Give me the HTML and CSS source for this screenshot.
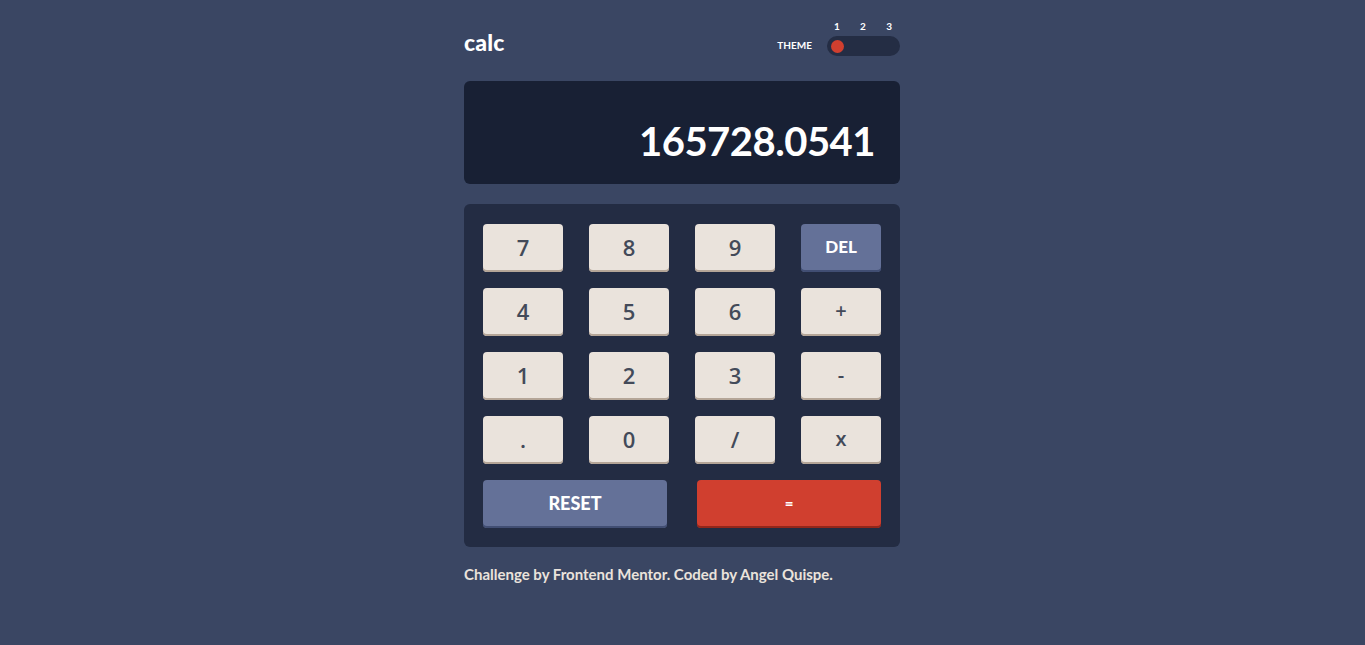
FILE: index.html
```html
<!DOCTYPE html>
<html lang="en">
<head>
<meta charset="utf-8">
<title>Calculator</title>
<link rel="stylesheet" href="styles.css">
</head>
<body>
<main class="calc">
  <header class="header">
    <h1 class="logo">calc</h1>
    <div class="theme">
      <span class="theme-label">THEME</span>
      <div class="theme-switch">
        <div class="theme-nums"><span>1</span><span>2</span><span>3</span></div>
        <div class="toggle"><span class="dot"></span></div>
      </div>
    </div>
  </header>
  <section class="display">165728.0541</section>
  <section class="keypad">
    <div class="keys">
      <button class="key">7</button>
      <button class="key">8</button>
      <button class="key">9</button>
      <button class="key key-alt">DEL</button>
      <button class="key">4</button>
      <button class="key">5</button>
      <button class="key">6</button>
      <button class="key key-op">+</button>
      <button class="key">1</button>
      <button class="key">2</button>
      <button class="key">3</button>
      <button class="key key-op">-</button>
      <button class="key">.</button>
      <button class="key">0</button>
      <button class="key">/</button>
      <button class="key key-op">x</button>
    </div>
    <div class="wide-keys">
      <button class="key key-alt key-wide">RESET</button>
      <button class="key key-eq key-wide">=</button>
    </div>
  </section>
  <footer class="footer">Challenge by Frontend Mentor. Coded by Angel Quispe.</footer>
</main>
</body>
</html>
```
FILE: styles.css
```css
* { box-sizing: border-box; }
html, body { margin: 0; padding: 0; }
body {
  background: #3a4663;
  font-family: Lato, "Noto Sans", sans-serif;
  color: #ffffff;
  min-height: 645px;
}
.calc {
  width: 436px;
  margin: 0 auto 0 464px;
  padding-top: 20px;
}
.header {
  display: flex;
  justify-content: space-between;
  align-items: flex-end;
  height: 36px;
}
.logo {
  margin: 0 0 2px 0;
  font-size: 23px;
  font-weight: 900;
  line-height: 24px;
  letter-spacing: 0.2px;
}
.theme {
  display: flex;
  align-items: flex-end;
  gap: 15px;
}
.theme-label {
  font-size: 10px;
  font-weight: 700;
  line-height: 12px;
  margin-bottom: 5px;
}
.theme-switch {
  display: flex;
  flex-direction: column;
  width: 73px;
}
.theme-nums {
  display: flex;
  justify-content: space-between;
  padding: 0 8px 0 7px;
  font-size: 10px;
  font-weight: 700;
  line-height: 12px;
  height: 12px;
  margin-bottom: 4px;
}
.toggle {
  height: 20px;
  border-radius: 10px;
  background: #242d44;
  display: flex;
  align-items: center;
  padding-left: 4px;
}
.dot {
  width: 13px;
  height: 13px;
  border-radius: 50%;
  background: #d03f2f;
}
.display {
  margin-top: 25px;
  height: 103px;
  border-radius: 6px;
  background: #182034;
  display: flex;
  align-items: center;
  justify-content: flex-end;
  padding: 16px 25px 0 0;
  font-size: 40px;
  font-weight: 700;
  letter-spacing: -0.5px;
}
.keypad {
  margin-top: 20px;
  background: #232c43;
  border-radius: 6px;
  padding: 20px 19px 19px 19px;
  display: flex;
  flex-direction: column;
  gap: 16px;
}
.keys {
  display: grid;
  grid-template-columns: repeat(4, 80px);
  column-gap: 26px;
  row-gap: 16px;
}
.key {
  height: 48px;
  border: none;
  border-radius: 4px;
  background: #eae3dc;
  box-shadow: inset 0 -2px 0 #b4a597;
  color: #434a59;
  font-family: "Open Sans", Lato, sans-serif;
  font-size: 22px;
  font-weight: 600;
  padding: 0 0 3px 0;
  cursor: pointer;
}
.key-op { font-size: 20px; }
.key-alt {
  background: #647198;
  box-shadow: inset 0 -2px 0 #414e73;
  color: #ffffff;
  font-family: Lato, "Noto Sans", sans-serif;
  font-size: 17px;
  font-weight: 900;
}
.wide-keys {
  display: flex;
  gap: 30px;
}
.key-wide {
  width: 184px;
  font-size: 18px;
}
.key-eq {
  background: #d03f2f;
  box-shadow: inset 0 -2px 0 #93261a;
  color: #ffffff;
  font-family: Lato, "Noto Sans", sans-serif;
  font-size: 15px;
  font-weight: 900;
}
.footer {
  margin-top: 19px;
  font-size: 15px;
  font-weight: 700;
  color: #eae3dc;
  line-height: 17px;
}
```
